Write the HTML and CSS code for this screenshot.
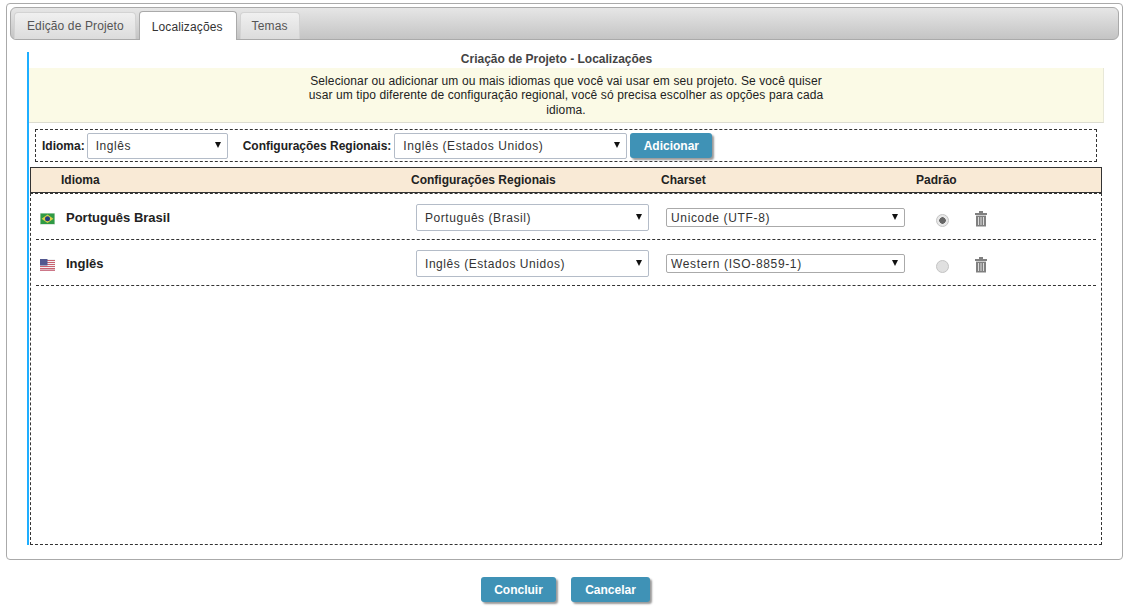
FILE: index.html
```html
<!DOCTYPE html>
<html lang="pt-BR">
<head>
<meta charset="utf-8">
<title>Criação de Projeto - Localizações</title>
<link rel="stylesheet" href="styles.css">
</head>
<body>
<main class="panel">
  <nav class="tabbar">
    <a class="tab">Edição de Projeto</a>
    <a class="tab tab-active">Localizações</a>
    <a class="tab">Temas</a>
  </nav>
  <section class="content">
    <h1 class="title">Criação de Projeto - Localizações</h1>
    <div class="hint"><p>Selecionar ou adicionar um ou mais idiomas que você vai usar em seu projeto. Se você quiser usar um tipo diferente de configuração regional, você só precisa escolher as opções para cada idioma.</p></div>
    <div class="toolbar">
      <label class="tool-label">Idioma:</label>
      <span class="sel sel-lang"><select><option>Inglês</option></select></span>
      <label class="tool-label tool-label-2">Configurações Regionais:</label>
      <span class="sel sel-region"><select><option>Inglês (Estados Unidos)</option></select></span>
      <button class="btn btn-add">Adicionar</button>
    </div>
    <div class="thead">
      <span class="col-lang th-lang">Idioma</span>
      <span class="col-region">Configurações Regionais</span>
      <span class="col-charset">Charset</span>
      <span class="col-default">Padrão</span>
    </div>
    <div class="tbody">
      <div class="row">
        <span class="col-lang name">
          <svg class="flag" viewBox="0 0 15 12"><rect width="15" height="12" fill="#dfe8df"/><rect x="0.5" y="0.5" width="14" height="10.5" fill="#2f9a45"/><path d="M7.5 1.4 13.4 5.7 7.5 10 1.6 5.7Z" fill="#dccf4a"/><circle cx="7.5" cy="5.7" r="2.5" fill="#23407f"/></svg>
          Português Brasil
        </span>
        <span class="col-region"><span class="sel sel-locale"><select><option>Português (Brasil)</option></select></span></span>
        <span class="col-charset"><span class="sel sel-charset"><select><option>Unicode (UTF-8)</option></select></span></span>
        <span class="col-default"><input class="radio" type="radio" name="def" checked disabled></span>
        <svg class="trash" viewBox="0 0 14 16"><path d="M5 1h4M1 3h12" stroke="#808080" stroke-width="1.8" fill="none"/><path d="M2 4.6h10V15.5H2Z" fill="#808080"/><path d="M4.5 6v8M7 6v8M9.5 6v8" stroke="#ddd" stroke-width="1"/></svg>
      </div>
      <div class="row">
        <span class="col-lang name">
          <svg class="flag" viewBox="0 0 15 12"><rect width="15" height="12" fill="#f2f2f4"/><path d="M0 1.5h15M0 3.5h15M0 5.5h15M0 7.5h15M0 9.5h15" stroke="#c9616f" stroke-width="1"/><rect y="10.5" width="15" height="1.5" fill="#c78"/><rect width="7.5" height="6.5" fill="#52588f"/></svg>
          Inglês
        </span>
        <span class="col-region"><span class="sel sel-locale"><select><option>Inglês (Estados Unidos)</option></select></span></span>
        <span class="col-charset"><span class="sel sel-charset"><select><option>Western (ISO-8859-1)</option></select></span></span>
        <span class="col-default"><input class="radio" type="radio" name="def" disabled></span>
        <svg class="trash" viewBox="0 0 14 16"><path d="M5 1h4M1 3h12" stroke="#808080" stroke-width="1.8" fill="none"/><path d="M2 4.6h10V15.5H2Z" fill="#808080"/><path d="M4.5 6v8M7 6v8M9.5 6v8" stroke="#ddd" stroke-width="1"/></svg>
      </div>
    </div>
  </section>
</main>
<footer class="actions">
  <button class="btn btn-ok">Concluir</button>
  <button class="btn btn-cancel">Cancelar</button>
</footer>
</body>
</html>
```
FILE: styles.css
```css
* { box-sizing: border-box; }
html, body { height: 100%; }
body {
  margin: 0;
  padding: 3px 4px 0 6px;
  background: #fff;
  font-family: "Liberation Sans", Arial, sans-serif;
  font-size: 12px;
  color: #222;
  overflow: hidden;
}
.panel {
  height: 557px;
  border: 1px solid #aaa;
  border-radius: 4px;
  padding: 3px;
}
.tabbar {
  height: 33px;
  display: flex;
  align-items: flex-end;
  gap: 3px;
  padding-left: 3px;
  border: 1px solid #aaa;
  border-radius: 6px;
  background: linear-gradient(#e6e6e6, #c4c4c4);
}
.tab {
  height: 27px;
  padding: 6px 11px 0 12px;
  font-size: 12px;
  letter-spacing: 0.12px;
  color: #555;
  border: 1px solid #d3d3d3;
  border-bottom: 0;
  border-radius: 4px 4px 0 0;
  background: linear-gradient(#f0f0f0, #dcdcdc);
}
.tab:last-child { padding-left: 11px; }
.tab-active {
  height: 29px;
  margin-bottom: -1px;
  padding-top: 8px;
  padding-right: 13px;
  color: #333;
  background: #fff;
  border-color: #aaa;
}
.content {
  height: 493px;
  margin: 12px 0 0 17px;
  border-left: 2px solid #1eaeff;
  width: 1077px;
  display: flex;
  flex-direction: column;
}
.title {
  margin: 0;
  height: 16px;
  font-size: 12px;
  line-height: 15px;
  font-weight: bold;
  color: #444;
  text-align: center;
  padding-right: 20px;
}
.hint {
  height: 55px;
  background: #fbfae6;
  border-bottom: 1px solid #dcdcd0;
  border-right: 1px solid #e8e8d8;
  padding-top: 6px;
}
.hint p {
  margin: 0 auto;
  width: 530px;
  text-align: center;
  line-height: 14.4px;
  letter-spacing: 0.11px;
  color: #222;
}
.toolbar {
  height: 33px;
  margin: 6px 6px 0 6px;
  border: 1px dashed #333;
  display: flex;
  align-items: center;
  padding-left: 6px;
  width: 1062px;
}
.tool-label { font-weight: bold; color: #222; white-space: nowrap; margin-right: 2px; }
.tool-label-2 { margin-left: 15px; margin-right: 3px; }
.sel { position: relative; display: inline-block; }
.sel select {
  appearance: none;
  width: 100%;
  height: 100%;
  background: #fff;
  border: 1px solid #b4bcc8;
  border-radius: 2px;
  padding: 0 0 0 8px;
  font-family: "Liberation Sans", Arial, sans-serif;
  font-size: 12px;
  letter-spacing: 0.55px;
  color: #333;
  display: block;
}
.sel::after {
  content: "";
  position: absolute;
  right: 7px;
  top: 50%;
  margin-top: -4px;
  border-left: 3px solid transparent;
  border-right: 3px solid transparent;
  border-top: 6px solid #111;
}
.sel-lang { width: 141px; height: 26px; }
.sel-region { width: 233px; height: 26px; }
.sel-locale { width: 233px; height: 27px; }
.sel-charset { width: 239px; height: 19px; }
.sel-charset select { padding-left: 4px; border-color: #aaa; letter-spacing: 0.65px; }
.btn {
  border: 0;
  border-radius: 3px;
  background: #3f92b6;
  color: #fff;
  font-family: "Liberation Sans", Arial, sans-serif;
  font-size: 12px;
  font-weight: bold;
  height: 25px;
  box-shadow: 2px 2px 2px #999;
  padding: 0;
}
.btn-add { width: 82px; margin-left: 3px; }
.thead {
  height: 26px;
  margin: 5px 0 0 1px;
  width: 1072px;
  display: flex;
  align-items: center;
  background: #f9ead6;
  border: 1px solid #333;
  font-weight: bold;
  color: #222;
}
.col-lang { width: 380px; flex: none; }
.th-lang { padding-left: 30px; }
.col-region { width: 250px; flex: none; }
.col-charset { width: 255px; flex: none; }
.tbody {
  flex: 1;
  margin-left: 1px;
  width: 1072px;
  border: 1px dashed #333;
  padding: 0 5px;
}
.row {
  height: 46px;
  padding-top: 2px;
  display: flex;
  align-items: center;
  border-bottom: 1px dashed #333;
}
.row .col-lang { width: 380px; }
.row .col-region { width: 250px; }
.row .col-charset { width: 256px; }
.name {
  display: flex;
  align-items: center;
  font-size: 13px;
  font-weight: bold;
  color: #222;
  padding-left: 4px;
}
.flag {
  width: 15px;
  height: 12px;
  margin-right: 11px;
  flex: none;
  position: relative;
  top: 1px;
}
.col-default { display: inline-flex; align-items: center; }
.row .col-default { width: 52px; padding-left: 14px; }
.radio {
  appearance: none;
  margin: 0;
  width: 13px;
  height: 13px;
  border: 1px solid #c4c4c4;
  border-radius: 50%;
  background: #e0e0e0;
  position: relative;
  top: 3px;
}
.radio:checked {
  background: radial-gradient(circle, #666 0 3px, #e8e8e8 3.5px);
}
.trash { width: 14px; height: 16px; flex: none; position: relative; top: 1.5px; }
.row .sel-locale, .row .sel-charset { vertical-align: middle; }
.actions {
  display: flex;
  justify-content: center;
  gap: 15px;
  margin-top: 17px;
  padding-left: 2px;
}
.btn-ok { width: 75px; }
.btn-cancel { width: 79px; }
```
